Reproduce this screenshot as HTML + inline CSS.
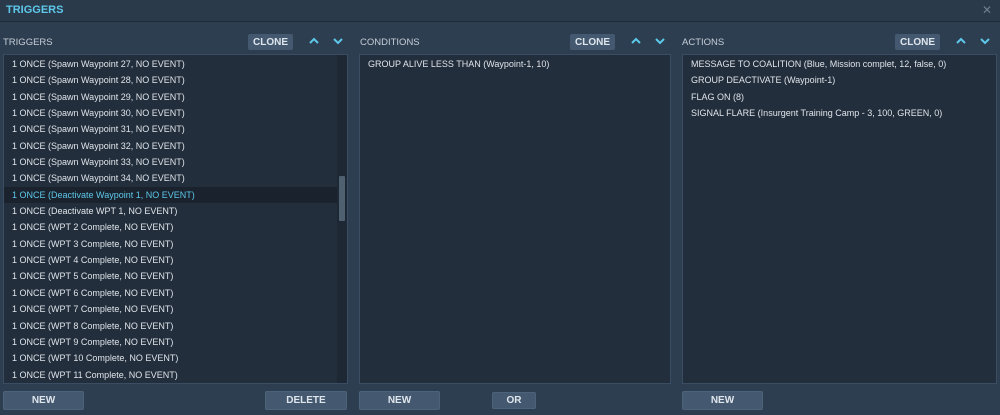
<!DOCTYPE html>
<html><head><style>
*{margin:0;padding:0;box-sizing:border-box}
body{width:1000px;height:415px;background:#2d3e50;font-family:"Liberation Sans","DejaVu Sans",sans-serif;position:relative;overflow:hidden;color:#d8dee6}
.a{position:absolute}
.title{left:0;top:0;width:1000px;height:22px;background:#2a3a4b;border-bottom:1px solid #1f2b38}
.title span{position:absolute;left:6px;top:4px;font-size:11px;font-weight:bold;color:#5ec8ea}
.x{right:8px;top:3px;color:#6e7e8e;font-size:12px}
.lbl{font-size:9.5px;color:#c6ced8;top:37px}
.clone,.btn{display:flex;align-items:center;justify-content:center;color:#dfe5ec;font-weight:bold;border-radius:2px;background:#44596f}
.clone{top:34px;width:45px;height:16px;font-size:10px}
.arr{top:34px;width:12px;height:14px}
.list{top:54px;height:330px;background:#222e3c;border:1px solid #3a4d62}
.row{height:16.35px;line-height:16px;font-size:9px;padding-left:8px;color:#dfe4ea;white-space:nowrap}
.sel{background:#1a222d;color:#5ec8ea}
.btn{top:391px;height:19px;font-size:10px;border:1px solid #4d6379}
</style></head><body>
<div class="a title"><span>TRIGGERS</span></div>
<div class="a x">✕</div>

<div class="a lbl" style="left:3px">TRIGGERS</div>
<div class="a clone" style="left:248px">CLONE</div>
<svg class="a arr" style="left:308px" viewBox="0 0 12 14"><path d="M2 9 L6 5 L10 9" stroke="#5ec8ea" stroke-width="2" fill="none"/></svg>
<svg class="a arr" style="left:332px" viewBox="0 0 12 14"><path d="M2 5 L6 9 L10 5" stroke="#5ec8ea" stroke-width="2" fill="none"/></svg>

<div class="a lbl" style="left:360px">CONDITIONS</div>
<div class="a clone" style="left:570px">CLONE</div>
<svg class="a arr" style="left:630px" viewBox="0 0 12 14"><path d="M2 9 L6 5 L10 9" stroke="#5ec8ea" stroke-width="2" fill="none"/></svg>
<svg class="a arr" style="left:654px" viewBox="0 0 12 14"><path d="M2 5 L6 9 L10 5" stroke="#5ec8ea" stroke-width="2" fill="none"/></svg>

<div class="a lbl" style="left:682px">ACTIONS</div>
<div class="a clone" style="left:895px">CLONE</div>
<svg class="a arr" style="left:955px" viewBox="0 0 12 14"><path d="M2 9 L6 5 L10 9" stroke="#5ec8ea" stroke-width="2" fill="none"/></svg>
<svg class="a arr" style="left:979px" viewBox="0 0 12 14"><path d="M2 5 L6 9 L10 5" stroke="#5ec8ea" stroke-width="2" fill="none"/></svg>

<div class="a list" style="left:3px;width:345px;padding-top:1px">
<div class="row">1 ONCE (Spawn Waypoint 27, NO EVENT)</div>
<div class="row">1 ONCE (Spawn Waypoint 28, NO EVENT)</div>
<div class="row">1 ONCE (Spawn Waypoint 29, NO EVENT)</div>
<div class="row">1 ONCE (Spawn Waypoint 30, NO EVENT)</div>
<div class="row">1 ONCE (Spawn Waypoint 31, NO EVENT)</div>
<div class="row">1 ONCE (Spawn Waypoint 32, NO EVENT)</div>
<div class="row">1 ONCE (Spawn Waypoint 33, NO EVENT)</div>
<div class="row">1 ONCE (Spawn Waypoint 34, NO EVENT)</div>
<div class="row sel" style="width:333px">1 ONCE (Deactivate Waypoint 1, NO EVENT)</div>
<div class="row">1 ONCE (Deactivate WPT 1, NO EVENT)</div>
<div class="row">1 ONCE (WPT 2 Complete, NO EVENT)</div>
<div class="row">1 ONCE (WPT 3 Complete, NO EVENT)</div>
<div class="row">1 ONCE (WPT 4 Complete, NO EVENT)</div>
<div class="row">1 ONCE (WPT 5 Complete, NO EVENT)</div>
<div class="row">1 ONCE (WPT 6 Complete, NO EVENT)</div>
<div class="row">1 ONCE (WPT 7 Complete, NO EVENT)</div>
<div class="row">1 ONCE (WPT 8 Complete, NO EVENT)</div>
<div class="row">1 ONCE (WPT 9 Complete, NO EVENT)</div>
<div class="row">1 ONCE (WPT 10 Complete, NO EVENT)</div>
<div class="row">1 ONCE (WPT 11 Complete, NO EVENT)</div>
<div class="a" style="left:333px;top:0;width:10px;height:328px;background:#1e2834"></div>
<div class="a" style="left:335px;top:121px;width:6px;height:45px;background:#4f6070;border-radius:1px"></div>
</div>

<div class="a list" style="left:359px;width:312px;padding-top:1px">
<div class="row">GROUP ALIVE LESS THAN (Waypoint-1, 10)</div>
</div>

<div class="a list" style="left:682px;width:315px;padding-top:1px">
<div class="row">MESSAGE TO COALITION (Blue, Mission complet, 12, false, 0)</div>
<div class="row">GROUP DEACTIVATE (Waypoint-1)</div>
<div class="row">FLAG ON (8)</div>
<div class="row">SIGNAL FLARE (Insurgent Training Camp - 3, 100, GREEN, 0)</div>
</div>

<div class="a btn" style="left:3px;width:81px">NEW</div>
<div class="a btn" style="left:265px;width:82px">DELETE</div>
<div class="a btn" style="left:359px;width:81px">NEW</div>
<div class="a btn" style="left:492px;width:44px;top:392px;height:17px">OR</div>
<div class="a btn" style="left:682px;width:81px">NEW</div>
</body></html>
